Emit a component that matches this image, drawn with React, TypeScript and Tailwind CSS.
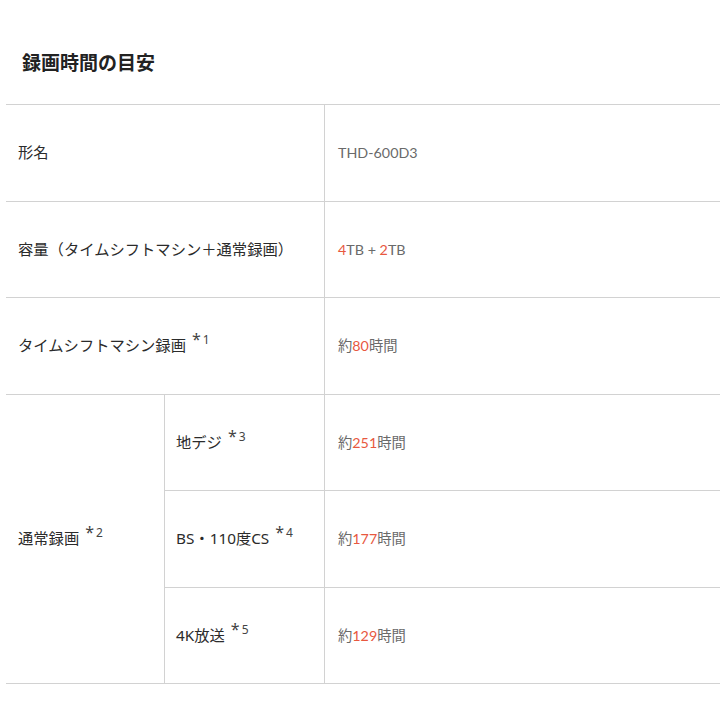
import React from "react";

const jp = "font-['Noto_Sans','Noto_Sans_CJK_JP',sans-serif]";
const lato = "font-['Lato','Noto_Sans_CJK_JP',sans-serif]";

function Note({ n }: { n: string }) {
  return (
    <span className="relative -top-[6px] ml-[6px] text-[16px] leading-none text-[#444]">
      *<span className="relative -top-[1px] ml-[2px] text-[12px]">{n}</span>
    </span>
  );
}

function Val({ pre, num, post }: { pre?: string; num: string; post?: string }) {
  return (
    <span>
      {pre}
      <span className="text-[#e8583f]">{num}</span>
      {post}
    </span>
  );
}

export default function App() {
  const cell = "flex items-center border-b border-[#d2d2d2]";
  const left = `${cell} pl-[12px] text-[15.3px] text-[#2b2b2b] ${jp}`;
  const mid = `${cell} pl-[11px] border-l text-[15.3px] text-[#2b2b2b] ${jp}`;
  const right = `${cell} pl-[13px] border-l text-[14.3px] text-[#6a6a6a] ${lato}`;
  return (
    <div className="w-[720px] h-[720px] bg-white overflow-hidden">
      <h2 className={`pl-[22px] pt-[49px] h-[104px] text-[19px] font-bold text-[#222] ${jp}`}>
        録画時間の目安
      </h2>
      <div className="ml-[6px] w-[714px] grid grid-cols-[158px_160px_396px] grid-rows-[repeat(6,96.5px)] border-t border-[#d2d2d2]">
        <div className={`${left} col-span-2`}>形名</div>
        <div className={right}>THD-600D3</div>

        <div className={`${left} col-span-2`}>容量（タイムシフトマシン＋通常録画）</div>
        <div className={right}>
          <span>
            <span className="text-[#e8583f]">4</span>TB + <span className="text-[#e8583f]">2</span>TB
          </span>
        </div>

        <div className={`${left} col-span-2`}>
          <span>
            タイムシフトマシン録画<Note n="1" />
          </span>
        </div>
        <div className={right}>
          <Val pre="約" num="80" post="時間" />
        </div>

        <div className={`${left} row-span-3`}>
          <span>
            通常録画<Note n="2" />
          </span>
        </div>
        <div className={mid}>
          <span>
            地デジ<Note n="3" />
          </span>
        </div>
        <div className={right}>
          <Val pre="約" num="251" post="時間" />
        </div>
        <div className={mid}>
          <span>
            BS・110度CS<Note n="4" />
          </span>
        </div>
        <div className={right}>
          <Val pre="約" num="177" post="時間" />
        </div>
        <div className={mid}>
          <span>
            4K放送<Note n="5" />
          </span>
        </div>
        <div className={right}>
          <Val pre="約" num="129" post="時間" />
        </div>
      </div>
    </div>
  );
}
